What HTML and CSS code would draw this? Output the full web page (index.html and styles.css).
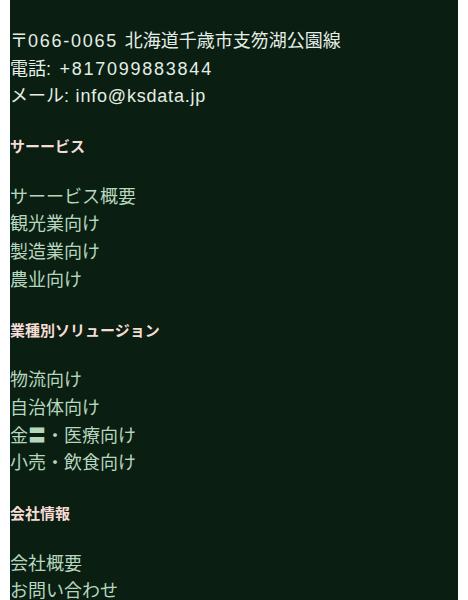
FILE: index.html
```html
<!DOCTYPE html>
<html lang="ja">
<head>
<meta charset="utf-8">
<link rel="stylesheet" href="styles.css">
</head>
<body>
<footer class="footer">
  <div class="contact">
    <p>〒<span class="num">066-0065 </span>北海道千歳市支笏湖公園線</p>
    <p>電話<span class="num">: +817099883844</span></p>
    <p>メール<span class="mail">: info@ksdata.jp</span></p>
  </div>
  <h3 class="heading">サーービス</h3>
  <ul class="links">
    <li>サーービス概要</li>
    <li>観光業向け</li>
    <li>製造業向け</li>
    <li>農业向け</li>
  </ul>
  <h3 class="heading">業種別ソリュージョン</h3>
  <ul class="links">
    <li>物流向け</li>
    <li>自治体向け</li>
    <li>金〓・医療向け</li>
    <li>小売・飲食向け</li>
  </ul>
  <h3 class="heading">会社情報</h3>
  <ul class="links">
    <li>会社概要</li>
    <li>お問い合わせ</li>
  </ul>
</footer>
</body>
</html>
```

FILE: styles.css
```css
html, body {
  margin: 0;
  padding: 0;
  background: #ffffff;
}
body {
  padding: 0 10px;
  font-family: "Liberation Sans", "Noto Sans CJK JP", sans-serif;
}
.footer {
  background: #0a1e12;
  padding-top: 28px;
  padding-bottom: 40px;
  display: flex;
  flex-direction: column;
  min-height: 600px;
  box-sizing: border-box;
}
.contact p {
  margin: 0;
  font-size: 18px;
  line-height: 27.67px;
  color: #e4eee6;
}
.num {
  letter-spacing: 1.75px;
}
.mail {
  letter-spacing: 0.8px;
}
.heading {
  margin: 25.4px 0 25.4px;
  font-size: 15px;
  line-height: 22px;
  font-weight: bold;
  color: #f6dcd6;
}
.links {
  list-style: none;
  margin: 0;
  padding: 0;
}
.links li {
  font-size: 18px;
  line-height: 27.67px;
  color: #b6d6be;
}
```
